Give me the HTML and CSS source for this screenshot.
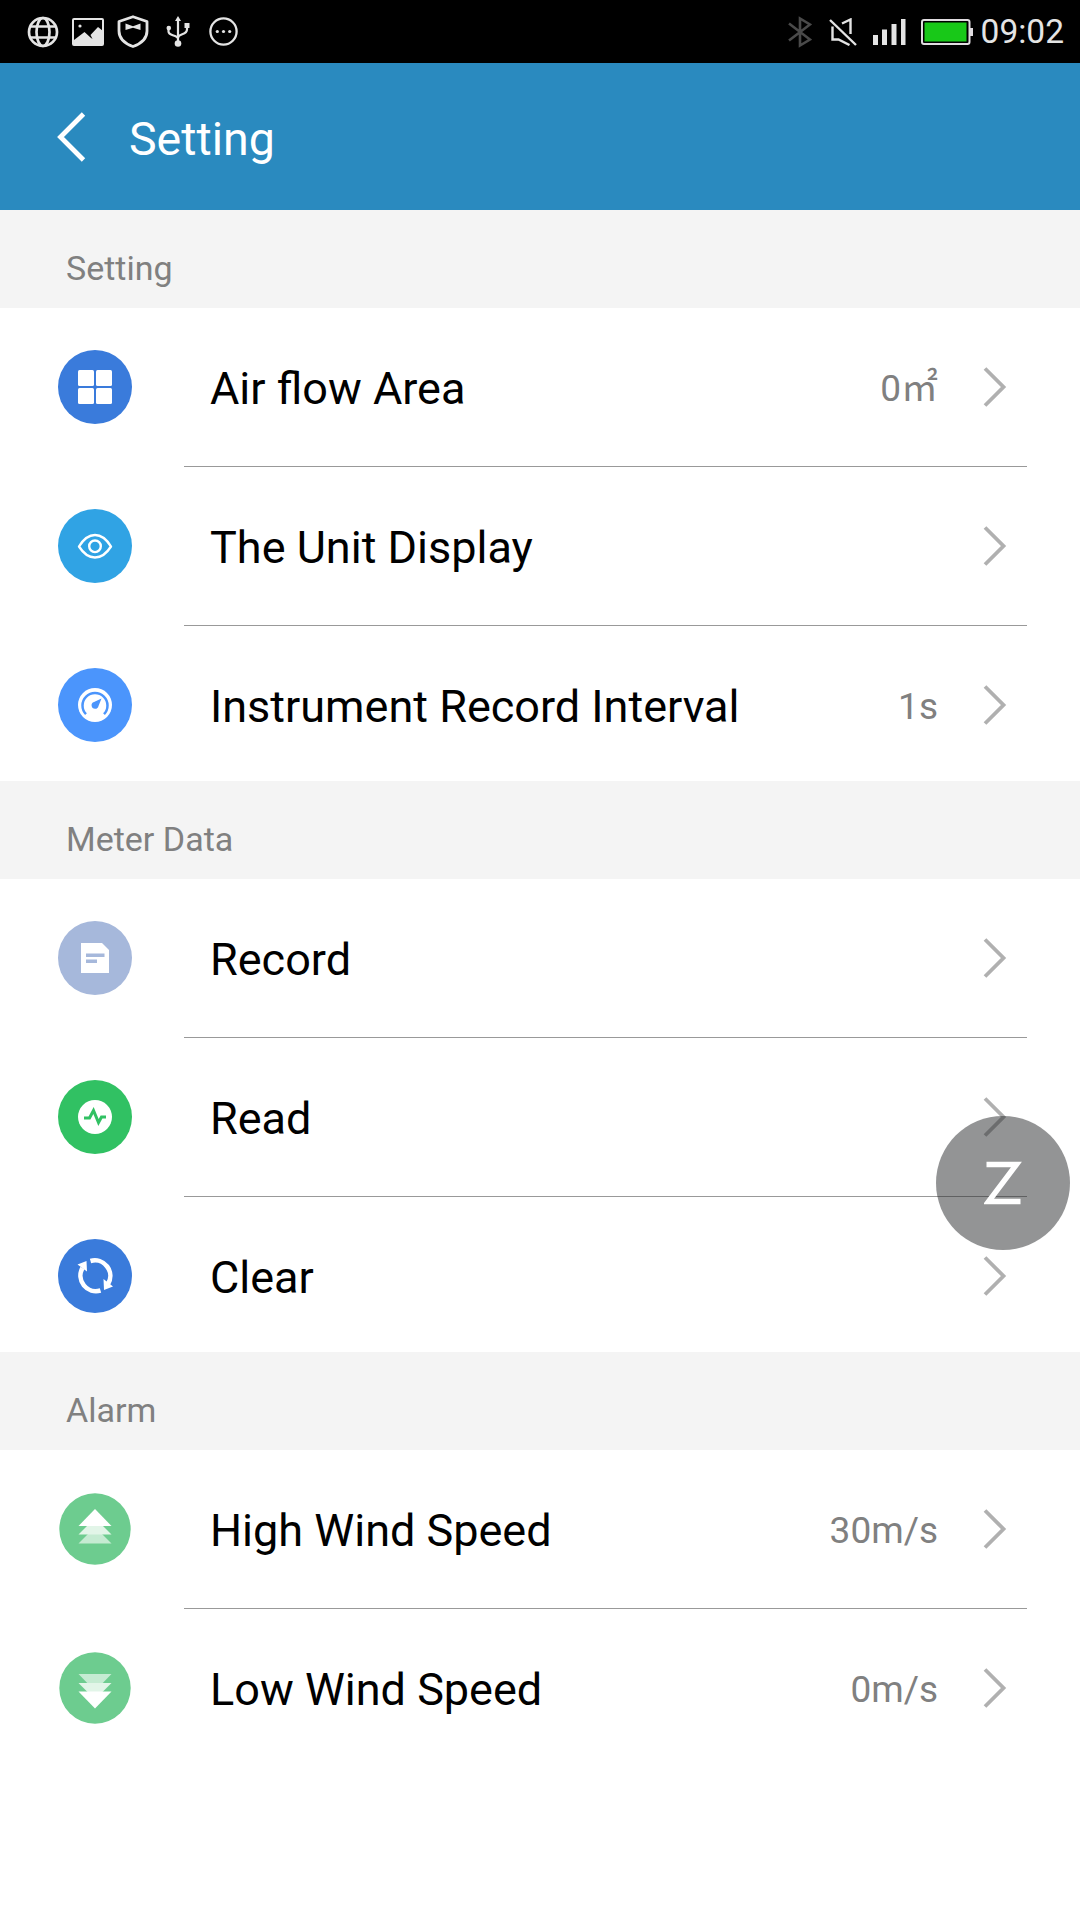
FILE: index.html
```html
<!DOCTYPE html>
<html lang="en">
<head>
  <meta charset="UTF-8">
  <meta name="viewport" content="width=device-width, initial-scale=1.0">
  <title>Setting</title>
  <link rel="stylesheet" href="styles.css">
</head>
<body>
  <div class="status-bar">
    <div class="status-left">
      <svg width="32" height="32" viewBox="0 0 32 32" fill="none" stroke="#e4e4e4" stroke-width="2.7">
        <circle cx="16" cy="16" r="14"/>
        <ellipse cx="16" cy="16" rx="6.5" ry="14"/>
        <path d="M3.5 10.5h25M3.5 21.5h25"/>
      </svg>
      <svg width="32" height="28" viewBox="0 0 32 28">
        <rect x="1" y="1" width="30" height="26" rx="1" fill="none" stroke="#e4e4e4" stroke-width="2"/>
        <circle cx="8" cy="8" r="1.6" fill="#e4e4e4"/>
        <path d="M2 22l10.500-8 6 5.500 2 1.500-2-4 7.500-8 5 4v14H2z" fill="#e4e4e4"/>
      </svg>
      <svg width="32" height="33" viewBox="0 0 32 33">
        <path d="M16 1.7L30 6.5V16c0 8-5.5 12.5-14 15.5C7.5 28.5 2 24 2 16V6.5z" fill="none" stroke="#e4e4e4" stroke-width="2.8" stroke-linejoin="round"/>
        <path d="M8.5 8.5l7.500 2.800 7.500-2.800v6.500L16 12.8 8.5 15z" fill="#e4e4e4"/>
      </svg>
      <svg class="usb" width="24" height="31" viewBox="0 0 24 31">
        <path d="M12 4v22M2.5 12v3.500c0 5 9.500 3 9.500 7.500M21 9v4.500c0 6-9 3.500-9 8.500" fill="none" stroke="#e4e4e4" stroke-width="2.2"/>
        <path d="M12 0l3 5H9zM18.500 7h5v5h-5z" fill="#e4e4e4"/>
        <circle cx="2.8" cy="12" r="2.3" fill="#e4e4e4"/>
        <circle cx="12" cy="27.5" r="3.3" fill="#e4e4e4"/>
      </svg>
      <svg class="more" width="29" height="29" viewBox="0 0 29 29" fill="#e4e4e4">
        <circle cx="14.5" cy="14.5" r="13.1" fill="none" stroke="#e4e4e4" stroke-width="2.3"/>
        <circle cx="8.3" cy="14.5" r="1.6"/>
        <circle cx="14.5" cy="14.5" r="1.6"/>
        <circle cx="20.7" cy="14.5" r="1.6"/>
      </svg>
    </div>
    <div class="status-right">
      <svg width="24" height="32" viewBox="0 0 24 32" fill="none" stroke="#4a4a4a" stroke-width="2.6">
        <path d="M1 7.500L22 23.500 12 29.500V2.500l10 6L1 24.500"/>
      </svg>
      <svg class="mute" width="28" height="28" viewBox="0 0 28 28" fill="none" stroke="#e4e4e4" stroke-width="2.4">
        <path d="M1 2l26 25"/>
        <path d="M13 5.500L21.500 1.500V16M3.500 8.500v13h6l11 5.500"/>
      </svg>
      <svg class="signal" width="33" height="26" viewBox="0 0 33 26" fill="#e4e4e4">
        <path d="M0 16h5v10H0zM9 10.500h5V26H9zM18.500 5h5v21h-5zM28 0h4.500v26H28z"/>
      </svg>
      <svg class="battery" width="52" height="26" viewBox="0 0 52 26">
        <rect x="1" y="1" width="47.5" height="24" rx="2" fill="none" stroke="#e0dce0" stroke-width="2"/>
        <rect x="3.5" y="3.5" width="42" height="19" fill="#18c818"/>
        <path d="M49 9h3v8h-3z" fill="#e0dce0"/>
      </svg>
      <span class="time">09:02</span>
    </div>
  </div>

  <header class="header">
    <svg width="30" height="50" viewBox="0 0 30 50" fill="none" stroke="#fff" stroke-width="4.8">
      <path d="M26.500 2L3.500 25l23 23"/>
    </svg>
    <h1>Setting</h1>
  </header>

  <h2 class="group-title">Setting</h2>
  <ul class="list">
    <li class="item">
      <svg class="icon" viewBox="0 0 74 74">
        <circle cx="37" cy="37" r="37" fill="#3a7bdb"/>
        <g fill="#fff">
          <rect x="20" y="20" width="16" height="16" rx="1.5"/>
          <rect x="38" y="20" width="16" height="16" rx="1.5"/>
          <rect x="20" y="38" width="16" height="16" rx="1.5"/>
          <rect x="38" y="38" width="16" height="16" rx="1.5"/>
        </g>
      </svg>
      <div class="content">
        <span class="name">Air flow Area</span>
        <span class="value">0㎡</span>
        <svg class="arrow" viewBox="0 0 24 40"><path d="M2 1.500L20.500 20 2 38.500"/></svg>
      </div>
    </li>
    <li class="item">
      <svg class="icon" viewBox="0 0 74 74">
        <circle cx="37" cy="37" r="37" fill="#30a3e4"/>
        <g fill="none" stroke="#fff" stroke-width="2.4">
          <path d="M21 37.500Q28 26 37 26t16 11.500Q46 48.500 37 48.500T21 37.500z" stroke-linejoin="round"/>
          <circle cx="37" cy="37.3" r="5.8"/>
        </g>
      </svg>
      <div class="content">
        <span class="name">The Unit Display</span>
        <svg class="arrow" viewBox="0 0 24 40"><path d="M2 1.500L20.500 20 2 38.500"/></svg>
      </div>
    </li>
    <li class="item">
      <svg class="icon" viewBox="0 0 74 74">
        <circle cx="37" cy="37" r="37" fill="#4b95fc"/>
        <circle cx="37" cy="37" r="17" fill="#fff"/>
        <path d="M28 46.200a12.500 12.500 0 1 1 18 0" fill="none" stroke="#4b95fc" stroke-width="2.5"/>
        <path d="M43.500 30.500L40.500 38a3.500 3.500 0 1 1-4.500-4z" fill="#4b95fc"/>
      </svg>
      <div class="content">
        <span class="name">Instrument Record Interval</span>
        <span class="value">1s</span>
        <svg class="arrow" viewBox="0 0 24 40"><path d="M2 1.500L20.500 20 2 38.500"/></svg>
      </div>
    </li>
  </ul>

  <h2 class="group-title">Meter Data</h2>
  <ul class="list">
    <li class="item">
      <svg class="icon" viewBox="0 0 74 74">
        <circle cx="37" cy="37" r="37" fill="#a6b8db"/>
        <path d="M23 22h21l7 7v23H23z" fill="#fff"/>
        <path d="M28 32.500h18.500V36H28zM28 38.500h11V42H28z" fill="#a6b8db"/>
      </svg>
      <div class="content">
        <span class="name">Record</span>
        <svg class="arrow" viewBox="0 0 24 40"><path d="M2 1.500L20.500 20 2 38.500"/></svg>
      </div>
    </li>
    <li class="item">
      <svg class="icon" viewBox="0 0 74 74">
        <circle cx="37" cy="37" r="37" fill="#31c163"/>
        <circle cx="37" cy="37" r="17" fill="#fff"/>
        <path d="M26 38h5.500l4-7.500 5 12 3-5.500H48" fill="none" stroke="#31c163" stroke-width="3"/>
      </svg>
      <div class="content">
        <span class="name">Read</span>
        <svg class="arrow" viewBox="0 0 24 40"><path d="M2 1.500L20.500 20 2 38.500"/></svg>
      </div>
    </li>
    <li class="item">
      <svg class="icon" viewBox="0 0 74 74">
        <circle cx="37" cy="37" r="37" fill="#3a7bdb"/>
        <g fill="none" stroke="#fff" stroke-width="4.6">
          <path d="M32.500 22a15.500 15.500 0 0 1 17.500 23"/>
          <path d="M42.500 51.500A15.500 15.500 0 0 1 24.500 29"/>
        </g>
        <path d="M19.500 25.500l9-3.500.5 10.500zM55 47.500L46 51l-.5-11z" fill="#fff"/>
      </svg>
      <div class="content">
        <span class="name">Clear</span>
        <svg class="arrow" viewBox="0 0 24 40"><path d="M2 1.500L20.500 20 2 38.500"/></svg>
      </div>
    </li>
  </ul>

  <h2 class="group-title">Alarm</h2>
  <ul class="list">
    <li class="item">
      <svg class="icon" viewBox="0 0 74 74">
        <circle cx="37" cy="37" r="35.7" fill="#6dcc8f"/>
        <path d="M37 35l16.500 16.500h-33z" fill="#c5ebd2"/>
        <path d="M37 26l16.500 16.500h-33z" fill="#e2f5e8"/>
        <path d="M37 17l16.500 17h-33z" fill="#fff"/>
      </svg>
      <div class="content">
        <span class="name">High Wind Speed</span>
        <span class="value">30m/s</span>
        <svg class="arrow" viewBox="0 0 24 40"><path d="M2 1.500L20.500 20 2 38.500"/></svg>
      </div>
    </li>
    <li class="item">
      <svg class="icon" viewBox="0 0 74 74">
        <circle cx="37" cy="37" r="35.7" fill="#6dcc8f"/>
        <path d="M37 40L20.500 23h33z" fill="#c5ebd2"/>
        <path d="M37 48.500L20.500 32h33z" fill="#e2f5e8"/>
        <path d="M37 57.500L20.500 40.500h33z" fill="#fff"/>
      </svg>
      <div class="content">
        <span class="name">Low Wind Speed</span>
        <span class="value">0m/s</span>
        <svg class="arrow" viewBox="0 0 24 40"><path d="M2 1.500L20.500 20 2 38.500"/></svg>
      </div>
    </li>
  </ul>

  <div class="float-btn">
    <svg width="38" height="44" viewBox="0 0 38 44" fill="none" stroke="#fff" stroke-width="5.4">
      <path d="M2.500 3.500H32.500L4.500 40.500H36.500"/>
    </svg>
  </div>
</body>
</html>
```
FILE: styles.css
```css
* {
  margin: 0;
  padding: 0;
  box-sizing: border-box;
}

body {
  width: 1080px;
  height: 1920px;
  overflow: hidden;
  background-color: #fff;
  font-family: Roboto, "Noto Sans CJK SC", sans-serif;
  color: #000;
}

svg {
  display: block;
  flex-shrink: 0;
}

/* status bar */
.status-bar {
  display: flex;
  justify-content: space-between;
  align-items: center;
  height: 63px;
  padding: 0 16px 0 27px;
  background-color: #000;
}

.status-left {
  display: flex;
  align-items: center;
  gap: 13px;
}

.status-left .usb {
  margin-left: 4px;
}

.status-left .more {
  margin-left: 6px;
}

.status-right {
  display: flex;
  align-items: center;
}

.mute {
  margin-left: 17px;
}

.signal {
  margin-left: 16px;
}

.battery {
  margin-left: 15px;
}

.time {
  margin-left: 8px;
  font-size: 33.5px;
  line-height: 63px;
  color: #e4e4e4;
}

/* header */
.header {
  display: flex;
  align-items: center;
  height: 147px;
  padding-left: 57px;
  background-color: #2a8abf;
  color: #fff;
}

.header h1 {
  margin-left: 42px;
  padding-top: 4px;
  font-size: 46.5px;
  font-weight: 400;
}

/* list */
.group-title {
  height: 98px;
  padding: 19px 66px 0;
  background-color: #f4f4f4;
  font-size: 34px;
  font-weight: 400;
  line-height: 78px;
  color: #808080;
}

.list {
  list-style: none;
}

.item {
  display: flex;
  align-items: center;
  height: 159px;
  padding: 0 53px 0 58px;
}

.item:last-child {
  margin-bottom: -4px;
}

.icon {
  width: 74px;
  height: 74px;
  margin-bottom: 2px;
}

.content {
  display: flex;
  align-items: center;
  flex: 1;
  height: 159px;
  margin-left: 52px;
  padding: 0 20px 0 26px;
  border-bottom: 1px solid #999;
}

.item:last-child .content {
  border-bottom-color: transparent;
}

.name {
  flex: 1;
  padding-top: 2px;
  font-size: 45px;
}

.value {
  padding-top: 3px;
  margin-right: 45px;
  font-size: 37px;
  line-height: 44px;
  color: #808080;
}

.arrow {
  width: 24px;
  height: 40px;
  fill: none;
  stroke: #b0b0b0;
  stroke-width: 3.8;
}

.float-btn {
  position: absolute;
  left: 936px;
  top: 1116px;
  display: flex;
  justify-content: center;
  align-items: center;
  width: 134px;
  height: 134px;
  border-radius: 50%;
  background-color: rgba(40, 42, 44, 0.5);
}
```
